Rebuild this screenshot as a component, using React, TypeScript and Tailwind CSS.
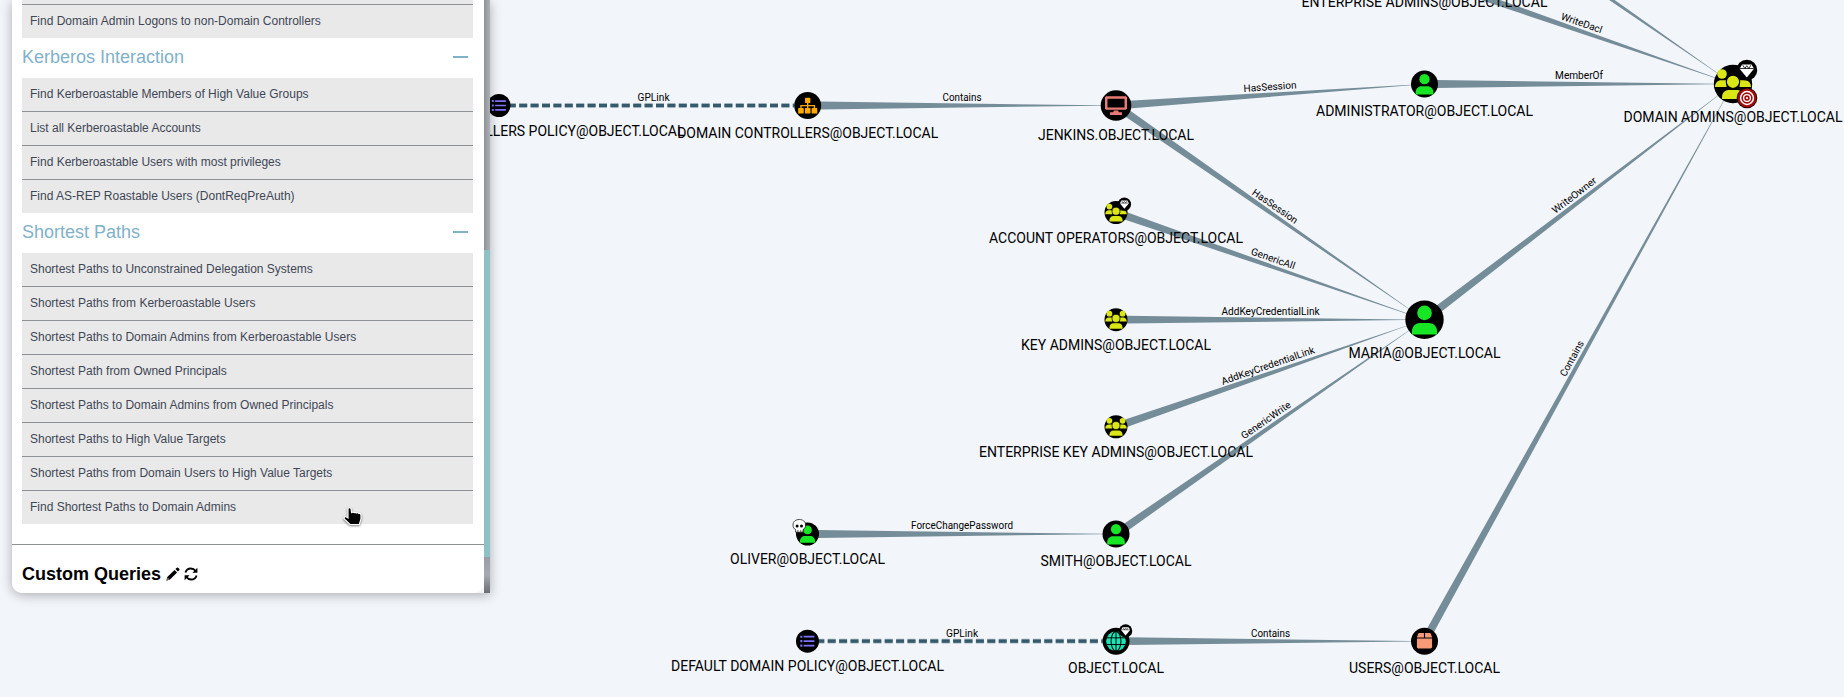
import React from 'react';

type NodeKind = 'list' | 'ou' | 'computer' | 'user' | 'group' | 'domain' | 'container';
type Badge = 'gem' | 'skull' | 'target';

interface GraphNode {
  id: string;
  x: number;
  y: number;
  r: number;
  kind: NodeKind;
  width: number;
  baseline: number;
  badges?: Badge[];
}

interface GraphEdge {
  from: [number, number, number];
  to: [number, number, number];
  label?: string;
  width?: number;
  dashed?: boolean;
}

const nodes: GraphNode[] = [
  { id: 'DEFAULT DOMAIN CONTROLLERS POLICY@OBJECT.LOCAL', x: 499, y: 105.5, r: 11.5, kind: 'list', width: 371, baseline: 136 },
  { id: 'DOMAIN CONTROLLERS@OBJECT.LOCAL', x: 807.7, y: 105.5, r: 13.5, kind: 'ou', width: 261, baseline: 138 },
  { id: 'JENKINS.OBJECT.LOCAL', x: 1116, y: 105.5, r: 15.3, kind: 'computer', width: 156, baseline: 140 },
  { id: 'ADMINISTRATOR@OBJECT.LOCAL', x: 1424.5, y: 84, r: 13.5, kind: 'user', width: 217, baseline: 116 },
  { id: 'DOMAIN ADMINS@OBJECT.LOCAL', x: 1733, y: 84, r: 19.2, kind: 'group', width: 219, baseline: 122, badges: ['gem', 'target'] },
  { id: 'ACCOUNT OPERATORS@OBJECT.LOCAL', x: 1116, y: 212.5, r: 11.5, kind: 'group', width: 254, baseline: 243, badges: ['gem'] },
  { id: 'KEY ADMINS@OBJECT.LOCAL', x: 1116, y: 319.7, r: 11.5, kind: 'group', width: 190, baseline: 350 },
  { id: 'MARIA@OBJECT.LOCAL', x: 1424.5, y: 319.7, r: 19.2, kind: 'user', width: 152, baseline: 358 },
  { id: 'ENTERPRISE KEY ADMINS@OBJECT.LOCAL', x: 1116, y: 426.8, r: 11.5, kind: 'group', width: 274, baseline: 457 },
  { id: 'OLIVER@OBJECT.LOCAL', x: 807.5, y: 534, r: 11.5, kind: 'user', width: 155, baseline: 564, badges: ['skull'] },
  { id: 'SMITH@OBJECT.LOCAL', x: 1116, y: 534, r: 13.5, kind: 'user', width: 151, baseline: 566 },
  { id: 'DEFAULT DOMAIN POLICY@OBJECT.LOCAL', x: 807.5, y: 641.2, r: 11.5, kind: 'list', width: 273, baseline: 671 },
  { id: 'OBJECT.LOCAL', x: 1116, y: 641.2, r: 13.5, kind: 'domain', width: 96, baseline: 673, badges: ['gem'] },
  { id: 'USERS@OBJECT.LOCAL', x: 1424.5, y: 641.2, r: 13.5, kind: 'container', width: 151, baseline: 673 },
];

const edges: GraphEdge[] = [
  { from: [499, 105.5, 11.5], to: [807.5, 105.5, 13.5], label: 'GPLink', width: 32, dashed: true },
  { from: [807.5, 105.5, 13.5], to: [1116, 105.5, 15], label: 'Contains', width: 39 },
  { from: [1116, 105.5, 15], to: [1424.5, 84, 13.5], label: 'HasSession', width: 53 },
  { from: [1116, 105.5, 15], to: [1424.5, 319.7, 19], label: 'HasSession', width: 53 },
  { from: [1424.5, 84, 13.5], to: [1733, 84, 19], label: 'MemberOf', width: 48 },
  { from: [1424.5, -23, 13.5], to: [1733, 84, 19], label: 'WriteDacl', width: 43 },
  { from: [1424.5, -130, 13.5], to: [1733, 84, 19] },
  { from: [1116, 212.5, 11.5], to: [1424.5, 319.7, 19], label: 'GenericAll', width: 46 },
  { from: [1116, 319.7, 11.5], to: [1424.5, 319.7, 19], label: 'AddKeyCredentialLink', width: 98 },
  { from: [1116, 426.8, 11.5], to: [1424.5, 319.7, 19], label: 'AddKeyCredentialLink', width: 98 },
  { from: [1116, 534, 13.5], to: [1424.5, 319.7, 19], label: 'GenericWrite', width: 58 },
  { from: [1424.5, 319.7, 19], to: [1733, 84, 19], label: 'WriteOwner', width: 53 },
  { from: [1424.5, 641.2, 13.5], to: [1733, 84, 19], label: 'Contains', width: 39 },
  { from: [807.5, 534, 11.5], to: [1116, 534, 13.5], label: 'ForceChangePassword', width: 102 },
  { from: [807.5, 641.2, 11.5], to: [1116, 641.2, 13.5], label: 'GPLink', width: 32, dashed: true },
  { from: [1116, 641.2, 13.5], to: [1424.5, 641.2, 13.5], label: 'Contains', width: 39 },
];

function measure(edge: GraphEdge) {
  const [x1, y1] = edge.from;
  const [x2, y2] = edge.to;
  return {
    length: Math.hypot(x2 - x1, y2 - y1),
    angle: (Math.atan2(y2 - y1, x2 - x1) * 180) / Math.PI,
  };
}

function Edge({ edge }: { edge: GraphEdge }) {
  const [x1, y1, r1] = edge.from;
  const r2 = edge.to[2];
  const { length, angle } = measure(edge);
  return (
    <g transform={`translate(${x1} ${y1}) rotate(${angle})`}>
      {edge.dashed ? (
        <>
          <path d={`M${r1 - 2.7} 0H${length - r2}`} stroke="#a3b3bd" strokeWidth="4.8" strokeDasharray="8 3.4" />
          <path d={`M${r1 - 2.7} 0H${length - r2}`} stroke="#355a6b" strokeWidth="3.2" strokeDasharray="8 3.4" />
        </>
      ) : (
        <path d={`M${r1 - 2} -3.9L${length - r2} -0.2V0.2L${r1 - 2} 3.9Z`} fill="#758d98" />
      )}
    </g>
  );
}

function EdgeLabel({ edge }: { edge: GraphEdge }) {
  if (!edge.label) return null;
  const [x1, y1] = edge.from;
  const { length, angle } = measure(edge);
  return (
    <text
      transform={`translate(${x1} ${y1}) rotate(${angle})`}
      x={length / 2 + 0.3}
      y={-4.6}
      textAnchor="middle"
      textLength={edge.width}
      lengthAdjust="spacingAndGlyphs"
      className="text-[10px]"
    >
      {edge.label}
    </text>
  );
}

function Glyph({ kind }: { kind: NodeKind }) {
  switch (kind) {
    case 'user':
      return (
        <g fill="#17e625">
          <circle cx="0" cy="-6.8" r="7.3" />
          <path d="M-12.6 14.8V12C-12.6 6.5-8.5 3.2-4.5 3.2H4.5C8.5 3.2 12.6 6.5 12.6 12V14.8Z" />
        </g>
      );
    case 'group':
      return (
        <g fill="#dbe617">
          <circle cx="-11" cy="-10" r="4.8" />
          <circle cx="11" cy="-10" r="4.8" />
          <path d="M-18 2.9C-18-1.5-15-3.8-12-3.8H-6.5V2.9ZM18 2.9C18-1.5 15-3.8 12-3.8H6.5V2.9Z" />
          <circle cy="-2.2" r="6.7" stroke="#000" strokeWidth="1.2" />
          <path d="M-11 15V13.5C-11 8.8-8 6-4.5 6H4.5C8 6 11 8.8 11 13.5V15Z" />
        </g>
      );
    case 'computer':
      return (
        <g fill="#ea7a75" fillRule="evenodd">
          <path d="M-12.6-11.7H12.6L13.8-10.5V4.2L12.6 5.4H-12.6L-13.8 4.2V-10.5ZM-10.7-8.4V2.4H10.7V-8.4Z" />
          <path d="M-2.8 6.3H2.8L3.5 8.6H7.5V11.8H-7.5V8.6H-3.5Z" />
        </g>
      );
    case 'ou':
      return (
        <g fill="#ffaa00">
          <rect x="-3.8" y="-11" width="7.6" height="7.6" rx="1.2" />
          <rect x="-13.6" y="3.5" width="8" height="8" rx="1.2" />
          <rect x="-4" y="3.5" width="8" height="8" rx="1.2" />
          <rect x="5.6" y="3.5" width="8" height="8" rx="1.2" />
          <path d="M0-4V5M-9.6 5V0.2H9.6V5" fill="none" stroke="#ffaa00" strokeWidth="1.9" />
        </g>
      );
    case 'list':
      return (
        <g stroke="#7f72fd" fill="none" strokeWidth="2.9">
          <path d="M-6.5-7.5H11.5M-6.5 0H11.5M-6.5 7.5H11.5" />
          <path d="M-12-7.5H-8.6M-12 0H-8.6M-12 7.5H-8.6" strokeWidth="3.6" />
        </g>
      );
    case 'domain':
      return (
        <g>
          <circle r="14" fill="#17e6b9" />
          <path d="M0-14V14M-14-4.8H14M-14 4.8H14" stroke="#000" strokeWidth="1.4" />
          <ellipse rx="7" ry="14" fill="none" stroke="#000" strokeWidth="1.5" />
        </g>
      );
    case 'container':
      return (
        <g fill="#f79a78">
          <path d="M-0.8-11.5V-5.2H-10.8L-9.3-9.8Q-8.8-11.5-7-11.5ZM0.8-11.5V-5.2H10.8L9.3-9.8Q8.8-11.5 7-11.5Z" />
          <path d="M-10.8-3.9H10.8V8.3Q10.8 10.3 8.8 10.3H-8.8Q-10.8 10.3-10.8 8.3Z" />
        </g>
      );
  }
}

function NodeBadge({ badge, r }: { badge: Badge; r: number }) {
  if (badge === 'gem') {
    const k = r > 15 ? 1 : 0.64;
    const px = r > 15 ? 13.8 : r > 12 ? 9.6 : 8.4;
    const py = r > 15 ? -13.8 : r > 12 ? -10.3 : -8.3;
    return (
      <g transform={`translate(${px} ${py}) scale(${k})`}>
        <circle r="10.4" fill="#000" />
        <path d="M-4.7-5.8H4.7L7.2-1.5L0 7.2L-7.2-1.5Z" fill="#fff" />
        <path d="M-7-1.7H7M-4-5L-2-1.7L0-4.5L2-1.7L4-5" stroke="#000" strokeWidth="0.8" fill="none" />
      </g>
    );
  }
  if (badge === 'target') {
    return (
      <g transform="translate(14 14)">
        <circle r="10.3" fill="#000" />
        <circle r="9.5" fill="#a30b0b" />
        <circle r="6.4" fill="none" stroke="#fff" strokeWidth="1.5" />
        <circle r="3.4" fill="none" stroke="#fff" strokeWidth="1.4" />
        <circle r="1.1" fill="#fff" />
      </g>
    );
  }
  return (
    <g transform="translate(-8.2 -8)">
      <path d="M-6.3-1C-6.3-4.5-3.5-6.5 0-6.5S6.3-4.5 6.3-1C6.3 1.5 5.2 2.8 3.7 3.6V6.2H-3.7V3.6C-5.2 2.8-6.3 1.5-6.3-1Z" fill="#fff" stroke="#000" strokeWidth="0.7" />
      <circle cx="-2.2" cy="0" r="1.5" />
      <circle cx="2.2" cy="0" r="1.5" />
      <path d="M-1.4 4V6M1.4 4V6" stroke="#000" strokeWidth="0.6" />
    </g>
  );
}

function Node({ node }: { node: GraphNode }) {
  return (
    <g>
      <g transform={`translate(${node.x} ${node.y})`}>
        <circle r={node.r} fill="#000" />
        <g transform={`scale(${node.r / 19.2})`}>
          <Glyph kind={node.kind} />
        </g>
        {node.badges?.map((b) => <NodeBadge key={b} badge={b} r={node.r} />)}
      </g>
      <text
        x={node.x}
        y={node.baseline}
        textAnchor="middle"
        textLength={node.width}
        lengthAdjust="spacingAndGlyphs"
        className="text-[14.5px]"
      >
        {node.id}
      </text>
    </g>
  );
}

function Graph() {
  return (
    <svg className="absolute inset-0 h-[697px] w-[1844px] font-['Roboto',sans-serif]" viewBox="0 0 1844 697">
      {edges.map((e, i) => <Edge key={i} edge={e} />)}
      {edges.map((e, i) => <EdgeLabel key={i} edge={e} />)}
      <text x="1424.5" y="7" textAnchor="middle" textLength="246" lengthAdjust="spacingAndGlyphs" className="text-[14.5px]">
        ENTERPRISE ADMINS@OBJECT.LOCAL
      </text>
      {nodes.map((n) => <Node key={n.id} node={n} />)}
    </svg>
  );
}

function QueryList({ items }: { items: string[] }) {
  return (
    <ul className="divide-y divide-[#8e9297] bg-[#e9e9e9]">
      {items.map((item) => (
        <li key={item} className="h-[34px] pl-2 text-[12px] leading-[32px] text-[#3f4756] last:h-[33px]">
          {item}
        </li>
      ))}
    </ul>
  );
}

function SectionHeader({ title }: { title: string }) {
  return (
    <div className="flex h-10 items-center justify-between pb-[2px] pr-[5px] text-[#7fb1c9]">
      <h4 className="text-[18px] leading-[38px]">{title}</h4>
      <span className="h-[2px] w-[15px] bg-[#7fb1c9]" />
    </div>
  );
}

function PencilIcon() {
  return (
    <svg className="h-[14px] w-[14px]" viewBox="0 0 14 14" fill="#000">
      <path d="M0.3 13.7L1.3 9.9L8.5 2.9L11.1 5.5L4 12.6ZM9.4 2.1L10.8 0.7Q11.5 0.1 12.2 0.8L13.2 1.8Q13.9 2.5 13.3 3.2L11.9 4.6Z" />
      <path d="M1.3 12.7L1.8 10.9L3.1 12.2Z" fill="#fff" />
    </svg>
  );
}

function RefreshIcon() {
  return (
    <svg className="h-[14px] w-[14px]" viewBox="0 0 14 14">
      <path d="M1.4 5.6C2.2 2.9 4.3 1.5 6.8 1.5C8.9 1.5 10.5 2.4 11.6 4M12.6 8.4C11.8 11.1 9.7 12.5 7.2 12.5C5.1 12.5 3.5 11.6 2.4 10" fill="none" stroke="#000" strokeWidth="1.8" />
      <path d="M13.4 0.8V5.8H8.4ZM0.6 13.2V8.2H5.6Z" />
    </svg>
  );
}

function Sidebar() {
  return (
    <aside className="relative ml-3 flex h-[593px] w-[478px] rounded-bl-[10px] font-['Liberation_Sans',sans-serif] shadow-[0_2px_12px_rgba(0,0,0,0.3)]">
      <div className="flex w-[472px] flex-col overflow-hidden rounded-b-[10px] bg-white">
        <div className="pl-[10px] pr-[11px]">
          <div className="h-1 bg-[#e9e9e9]" />
          <div className="h-px bg-[#8e9297]" />
          <div className="h-[33px] bg-[#e9e9e9] pl-2 text-[12px] leading-[32px] text-[#3f4756]">
            Find Domain Admin Logons to non-Domain Controllers
          </div>
          <SectionHeader title="Kerberos Interaction" />
          <QueryList
            items={[
              'Find Kerberoastable Members of High Value Groups',
              'List all Kerberoastable Accounts',
              'Find Kerberoastable Users with most privileges',
              'Find AS-REP Roastable Users (DontReqPreAuth)',
            ]}
          />
          <SectionHeader title="Shortest Paths" />
          <QueryList
            items={[
              'Shortest Paths to Unconstrained Delegation Systems',
              'Shortest Paths from Kerberoastable Users',
              'Shortest Paths to Domain Admins from Kerberoastable Users',
              'Shortest Path from Owned Principals',
              'Shortest Paths to Domain Admins from Owned Principals',
              'Shortest Paths to High Value Targets',
              'Shortest Paths from Domain Users to High Value Targets',
              'Find Shortest Paths to Domain Admins',
            ]}
          />
        </div>
        <div className="mt-5 border-t border-[#8e9297]" />
        <div className="flex items-center gap-1 pl-[10px] pt-[14px]">
          <h3 className="pr-px text-[18px] font-bold leading-[30px] text-black">Custom Queries</h3>
          <PencilIcon />
          <RefreshIcon />
        </div>
      </div>
      <div className="flex w-[6px] flex-col bg-[#a4a8ad]">
        <div className="h-[250px] bg-linear-to-r from-[#8f9398] to-[#adb0b5]" />
        <div className="h-[307px] bg-[#8fc0c5]" />
        <div className="grow bg-linear-to-b from-[#9a9da3] via-[#a6aab0] to-[#6b6e73]" />
      </div>
    </aside>
  );
}

function HandCursor() {
  return (
    <svg className="absolute left-[343px] top-[507px] h-[19px] w-[20px] drop-shadow-[0_1px_1px_rgba(0,0,0,0.5)]" viewBox="0 0 20 19">
      <path
        d="M5 1.2Q6.5.2 8 1.3L8.6 5.5Q10 4.7 11.2 5.6Q12.6 4.9 13.7 6Q15 5.3 16 6.5Q18 6 18 8.5V12L16.3 17.5H7L1.3 12Q.5 10 2.5 9.5L5 11Z"
        fill="#000"
        stroke="#fff"
        strokeWidth="1.2"
      />
    </svg>
  );
}

export default function App() {
  return (
    <main className="relative h-[697px] w-[1844px] overflow-hidden bg-[#f2f5fa]">
      <Graph />
      <Sidebar />
      <HandCursor />
    </main>
  );
}
